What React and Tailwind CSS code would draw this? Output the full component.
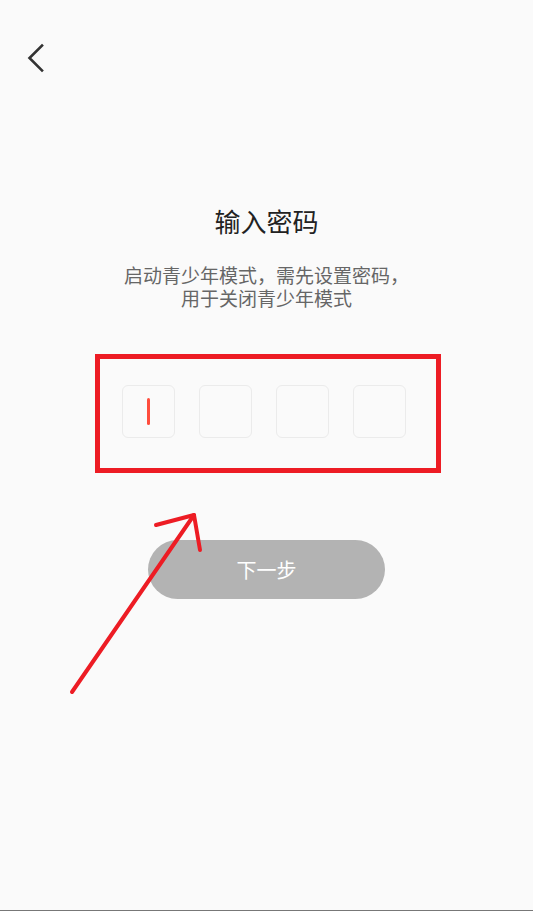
import React from 'react';

// Teen mode password entry screen
const FONT = { fontFamily: '"Noto Sans CJK SC", "Noto Sans", sans-serif' };

function BackIcon() {
  return (
    <svg width="20" height="32" viewBox="0 0 20 32" fill="none">
      <path d="M16 3.5 L3.5 16 L16 28.5" stroke="#333333" strokeWidth="2.6" strokeLinecap="square" strokeLinejoin="miter" />
    </svg>
  );
}

export default function App() {
  const cells = [0, 1, 2, 3];

  return (
    <div className="relative flex h-[911px] w-full flex-col overflow-hidden bg-[#fafafa]" style={FONT}>
      {/* top bar */}
      <div className="pl-[26px] pt-[42px]">
        <button type="button" className="block">
          <BackIcon />
        </button>
      </div>

      <h1 className="mt-[130px] text-center text-[26px] leading-[34px] font-normal text-[#222222]">
        输入密码
      </h1>
      <p className="mt-[25px] text-center text-[19px] leading-[23px] text-[#666666]">
        启动青少年模式，需先设置密码，
        <br />
        用于关闭青少年模式
      </p>

      {/* code inputs (annotated with a red frame) */}
      <div className="ml-[95px] mt-[45px] flex w-[346px] gap-[24px] border-[5px] border-[#ed1c24] pl-[22px] pt-[26px] pb-[30px]">
        {cells.map((i) => (
          <div
            key={i}
            className="flex h-[53px] w-[53px] items-center justify-center rounded-[6px] border border-[#ebebeb] bg-[#fafafa]"
          >
            {i === 0 && <div className="h-[27px] w-[3px] rounded-full bg-[#ff4d3d]" />}
          </div>
        ))}
      </div>

      <button
        type="button"
        className="ml-[148px] mt-[67px] flex h-[59px] w-[237px] items-center justify-center rounded-full bg-[#b3b3b3] text-[20px] text-white"
      >
        下一步
      </button>

      <div className="mt-auto h-px w-full bg-[#777777]" />

      {/* hand-drawn arrow annotation */}
      <svg className="pointer-events-none absolute inset-0 h-full w-full" viewBox="0 0 533 911" fill="none">
        <path d="M72 692 L194 515" stroke="#ed1c24" strokeWidth="4" strokeLinecap="round" />
        <path d="M156 525 L194 515 L200 550" stroke="#ed1c24" strokeWidth="4" strokeLinecap="round" strokeLinejoin="round" />
      </svg>
    </div>
  );
}
